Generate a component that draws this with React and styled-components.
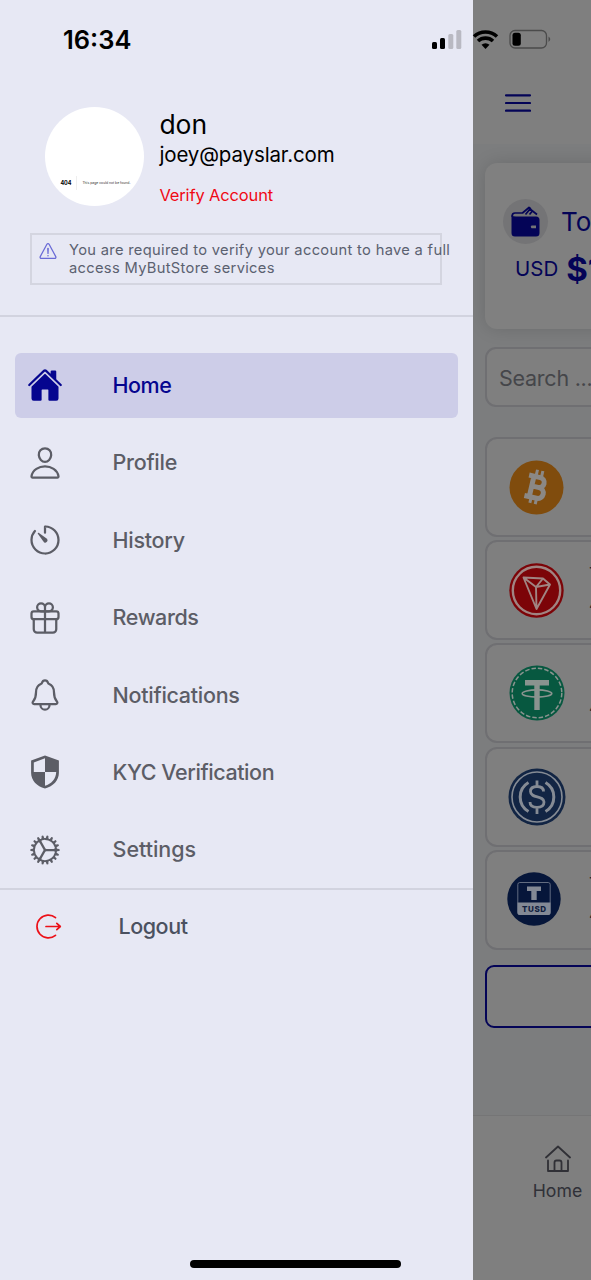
import React from 'react';
import styled, { createGlobalStyle, css } from 'styled-components';
import {
  IoHome,
  IoPersonOutline,
  IoTimerOutline,
  IoGiftOutline,
  IoNotificationsOutline,
  IoCogOutline,
  IoWarningOutline,
} from 'react-icons/io5';

const NAVY = '#05058f';
const NAVY_DIM = '#040457';

const MENU = [
  { label: 'Home', icon: <IoHome />, active: true, tracking: -0.5 },
  { label: 'Profile', icon: <IoPersonOutline /> },
  { label: 'History', icon: <IoTimerOutline /> },
  { label: 'Rewards', icon: <IoGiftOutline />, tracking: -0.4 },
  { label: 'Notifications', icon: <IoNotificationsOutline /> },
  { label: 'KYC Verification', icon: <ShieldIcon />, tracking: -0.42 },
  { label: 'Settings', icon: <IoCogOutline />, tracking: -0.05 },
];

const COINS = [
  { id: 'btc', icon: <BitcoinLogo />, left: 21.5 },
  { id: 'trx', icon: <TronLogo />, left: 21.5, name: 'TRX', amount: '4.00' },
  { id: 'usdt', icon: <TetherLogo />, left: 21.5, amount: '4.00' },
  { id: 'usdc', icon: <UsdcLogo />, left: 21 },
  { id: 'tusd', icon: <TusdLogo />, left: 20, name: 'TUSD', amount: '4.00' },
];

function App() {
  return (
    <Screen>
      <GlobalStyle />
      <Drawer>
        <Account>
          <Avatar>
            <AvatarCode>404</AvatarCode>
            <AvatarText>This page could not be found.</AvatarText>
          </Avatar>
          <AccountInfo>
            <Name>don</Name>
            <Email>joey@payslar.com</Email>
            <Verify>Verify Account</Verify>
          </AccountInfo>
        </Account>
        <Notice>
          <IoWarningOutline />
          <NoticeText>
            You are required to verify your account to have a full
            <br />
            access MyButStore services
          </NoticeText>
        </Notice>
        <Menu>
          {MENU.map((item) => (
            <MenuItem key={item.label} $active={item.active} $tracking={item.tracking}>
              <MenuIcon>{item.icon}</MenuIcon>
              <MenuLabel>{item.label}</MenuLabel>
            </MenuItem>
          ))}
        </Menu>
        <Logout>
          <LogoutIcon />
          Logout
        </Logout>
      </Drawer>

      <Page>
        <PageHeader>
          <MenuLines width="26" height="18" viewBox="0 0 26 18">
            <path d="M1 1.3h24M1 9h24M1 16.7h24" />
          </MenuLines>
        </PageHeader>
        <PageBody>
          <BalanceCard>
            <BalanceTitle>
              <WalletBadge>
                <WalletIcon />
              </WalletBadge>
              Total
            </BalanceTitle>
            <BalanceRow>
              <Currency>USD</Currency>
              <Amount>$1</Amount>
            </BalanceRow>
          </BalanceCard>
          <Search>Search ...</Search>
          <CoinList>
            {COINS.map((coin) => (
              <CoinCard key={coin.id}>
                <CoinLogo $left={coin.left}>{coin.icon}</CoinLogo>
                <CoinInfo>
                  <CoinLine>{coin.name}</CoinLine>
                  <CoinLine>{coin.amount}</CoinLine>
                </CoinInfo>
              </CoinCard>
            ))}
          </CoinList>
          <OutlineButton />
        </PageBody>
        <TabBar>
          <Tab>
            <TabHomeIcon />
            Home
          </Tab>
        </TabBar>
      </Page>

      <StatusBar>
        <Clock>16:34</Clock>
        <StatusIcons />
      </StatusBar>
      <HomeIndicator />
    </Screen>
  );
}

// icons

function ShieldIcon() {
  return (
    <svg viewBox="-1.5 -1.5 36 36">
      <path
        fill="currentColor"
        fillRule="evenodd"
        d="M16.5 0 30.400 5v12.200c0 7.500-5.600 13.600-13.900 15.800C8.200 30.800 2.600 24.700 2.600 17.200V5ZM16.500 2.800 5.300 7v9.500h11.200ZM16.500 16.500v13.800c6.300-1.800 11-6.800 11.200-13.800Z"
      />
    </svg>
  );
}

function LogoutIcon() {
  return (
    <svg width="27" height="27" viewBox="0 0 27 27" fill="none" stroke="#ec1018" strokeWidth="1.700">
      <path strokeLinecap="round" d="M20.500 4.600a11.400 11.400 0 1 0 0 17.800" />
      <path strokeLinecap="round" strokeLinejoin="round" d="M11 13.500h14M21.800 10.300l3.500 3.200-3.500 3.200" />
    </svg>
  );
}

function WalletIcon() {
  return (
    <svg width="29" height="31" viewBox="0 0 29 31">
      <path
        d="M1.300 11V9.500Q1.300 7 4 7h7.500l6.500-5.500 2 1.500M14.500 8.500 19 3l7 5.500M18.500 8.500l2.500-3"
        fill="none"
        stroke={NAVY_DIM}
        strokeWidth="1.700"
        strokeLinejoin="round"
      />
      <path
        fill={NAVY_DIM}
        fillRule="evenodd"
        d="M.5 9Q2 10.500 5 10.500h20q3.500 0 3.500 3.500V27q0 3.500-3.500 3.500H4Q.5 30.500.5 27ZM20.500 19.600q-1.600 1.300 0 2.600h4.500v-2.600Z"
      />
    </svg>
  );
}

function BitcoinLogo() {
  return (
    <svg width="55" height="55" viewBox="0 0 55 55">
      <circle cx="27.500" cy="27.500" r="27" fill="#804c0d" />
      <g transform="rotate(13 27.500 27.500)" fill="none" stroke="#8b8885">
        <path strokeWidth="5" d="M22.500 15.500v24M17.500 17H29a4.800 4.800 0 0 1 0 10H22.500M29 27h1a5.500 5.500 0 0 1 0 11H17.500" />
        <path strokeWidth="3" d="M24.500 10v6M30 10v6M24.500 38v6M30 38v6" />
      </g>
    </svg>
  );
}

function TronLogo() {
  return (
    <svg width="55" height="55" viewBox="0 0 55 55">
      <circle cx="27.500" cy="27.500" r="27.200" fill="#7c0408" />
      <circle cx="27.500" cy="27.500" r="23.700" fill="none" stroke="#a08482" strokeWidth="2.400" />
      <path
        d="M14.500 14.500 34 15.500l7 6L27.500 46Zm0 0L27 24l14-2.500M27 24l.5 22M27 24l7-8.500"
        fill="none"
        stroke="#a08482"
        strokeWidth="1.900"
        strokeLinejoin="round"
      />
    </svg>
  );
}

function TetherLogo() {
  return (
    <svg width="56" height="56" viewBox="0 0 56 56">
      <circle cx="28" cy="28" r="27.500" fill="#075840" />
      <circle cx="28" cy="28" r="24.800" fill="none" stroke="#8a938f" strokeWidth="1.500" strokeDasharray="4.500 2" />
      <path d="M16 15h24v5.500h-9.300V45h-5.400V20.500H16Z" fill="#8a938f" />
      <ellipse cx="28" cy="28.500" rx="14.800" ry="3.600" fill="none" stroke="#8a938f" strokeWidth="1.600" />
    </svg>
  );
}

function UsdcLogo() {
  return (
    <svg width="58" height="58" viewBox="0 0 58 58">
      <circle cx="29" cy="29" r="28.500" fill="#122544" />
      <g fill="none" stroke="#858b94">
        <circle cx="29" cy="29" r="25" strokeWidth="1.600" />
        <path strokeWidth="3" d="M20.500 14.500a16.800 16.800 0 0 0 0 29M37.500 14.500a16.800 16.800 0 0 1 0 29" />
        <path strokeWidth="2.800" d="M35.500 23.500c0-3.300-2.500-5-6.500-5s-6.500 1.800-6.500 5c0 7.200 13.500 3.500 13.500 10.500 0 3.400-2.700 5.300-7 5.300s-7-2-7-5.300M29 12.500v6M29 39v7" />
      </g>
    </svg>
  );
}

function TusdLogo() {
  return (
    <svg width="54" height="56" viewBox="0 0 54 56">
      <circle cx="27" cy="27" r="26.700" fill="#06163a" />
      <rect x="10.800" y="10.500" width="32.400" height="32" rx="2" fill="none" stroke="#626c80" />
      <path d="M10.500 30.500h33V41q0 2-2 2h-29q-2 0-2-2ZM20 14.500h14V19h-4.300v9h-5.400v-9H20Z" fill="#838995" />
      <text x="27" y="39.800" textAnchor="middle" fontFamily="Inter" fontWeight="800" fontSize="8" textLength="24" fill="#10203f">
        TUSD
      </text>
    </svg>
  );
}

function TabHomeIcon() {
  return (
    <svg width="26" height="28" viewBox="0 0 26 28" fill="none" stroke="#303036" strokeWidth="1.800">
      <path strokeLinecap="round" strokeLinejoin="round" d="M1 12.500 13 1.500l12 11" />
      <path strokeLinejoin="round" strokeLinecap="round" d="M3 15.500V26h20V15.500M9.500 26v-8.500q0-2 2-2h3q2 0 2 2V26" />
    </svg>
  );
}

function StatusIcons() {
  return (
    <svg width="122" height="22" viewBox="0 0 122 22">
      <rect x="1" y="13" width="5" height="7" rx="1.500" />
      <rect x="9" y="9" width="5" height="11" rx="1.500" />
      <rect x="17.300" y="5" width="5" height="15" rx="1.500" fill="#b9b9c2" />
      <rect x="25.300" y="1" width="5" height="19" rx="1.500" fill="#b9b9c2" />
      <g fill="none" stroke="#000" strokeWidth="3.600">
        <path d="M43 7.500a17 17 0 0 1 23 0" />
        <path d="M47 12a11.200 11.200 0 0 1 15 0" />
      </g>
      <path d="m50.500 15.800 4 4.200 4-4.200a6 6 0 0 0-8 0Z" />
      <rect x="79" y="1.500" width="36.500" height="17.500" rx="5" fill="none" stroke="#4b4b4b" strokeWidth="1.300" />
      <rect x="81.500" y="3.700" width="8.300" height="13" rx="2.500" />
      <path d="M117.500 7.500q3.500 2.700 0 5.500Z" fill="#4b4b4b" />
    </svg>
  );
}

// styles

const GlobalStyle = createGlobalStyle`
  * {
    box-sizing: border-box;
  }
  body {
    margin: 0;
    font-family: Inter, 'Liberation Sans', sans-serif;
  }
  svg {
    display: block;
    flex-shrink: 0;
  }
`;

const Screen = styled.div`
  position: relative;
  display: flex;
  width: 591px;
  height: 1280px;
  overflow: hidden;
`;

const Drawer = styled.aside`
  flex: 0 0 473px;
  padding-top: 107.400px;
  background: #e7e8f4;
`;

const Account = styled.div`
  display: flex;
  gap: 15px;
  height: 126px;
  padding-left: 45.400px;
`;

const Avatar = styled.div`
  display: flex;
  align-items: center;
  width: 99px;
  height: 99px;
  padding: 53px 0 0 15px;
  border-radius: 50%;
  background: #fff;
  overflow: hidden;
  white-space: nowrap;
`;

const AvatarCode = styled.span`
  width: 17px;
  border-right: 1px solid #eee;
  font-size: 5.500px;
  font-weight: 700;
  line-height: 14px;
`;

const AvatarText = styled.span`
  padding-left: 5px;
  color: #333;
  font-size: 3.400px;
  line-height: 8px;
`;

const AccountInfo = styled.div`
  color: #000;
`;

const Name = styled.div`
  font-size: 26.500px;
  line-height: 34px;
`;

const Email = styled.div`
  font-size: 20.500px;
  letter-spacing: -0.130px;
  line-height: 28px;
`;

const Verify = styled.div`
  margin-top: 19px;
  color: #f00a14;
  font-size: 16.500px;
  letter-spacing: -0.150px;
  line-height: 14px;
`;

const Notice = styled.div`
  display: flex;
  gap: 11px;
  width: 412px;
  height: 52px;
  margin-left: 30px;
  padding: 6px 0 0 6px;
  border: 2px solid #d4d5e0;
  color: #6a6ad6;
  font-size: 20px;
`;

const NoticeText = styled.p`
  margin: 0;
  color: #5b6170;
  font-size: 14.700px;
  letter-spacing: 0.320px;
  line-height: 18px;
  white-space: nowrap;
`;

const Menu = styled.nav`
  display: flex;
  flex-direction: column;
  gap: 12.400px;
  height: 575px;
  margin-top: 29.600px;
  padding: 36px 15px 0;
  border-top: 2px solid #d2d3df;
  border-bottom: 2px solid #d2d3df;
`;

const MenuItem = styled.div`
  display: flex;
  flex: 0 0 65px;
  align-items: center;
  gap: 49.400px;
  padding-left: 12.200px;
  border-radius: 6px;
  color: #5c5d66;
  font-size: 21.500px;
  font-weight: 500;
  letter-spacing: ${({ $tracking = -0.28 }) => $tracking}px;
  ${({ $active }) =>
    $active &&
    css`
      background: #cdcde8;
      color: ${NAVY};
    `}
`;

const MenuIcon = styled.span`
  width: 36px;
  height: 36px;

  svg {
    width: 36px;
    height: 36px;
  }
`;

const MenuLabel = styled.span`
  padding-bottom: 1px;
`;

const Logout = styled.div`
  display: flex;
  align-items: center;
  gap: 56.500px;
  height: 73px;
  padding-left: 35px;
  color: #4b5160;
  font-size: 21.500px;
  font-weight: 500;
  letter-spacing: -0.450px;
`;

const Page = styled.main`
  display: flex;
  flex: 1;
  flex-direction: column;
  min-width: 0;
  overflow: hidden;
  background: #7c7d7e;
`;

const PageHeader = styled.header`
  height: 144px;
  padding: 93.500px 0 0 32px;
  background: #7f7f7f;
`;

const MenuLines = styled.svg`
  fill: none;
  stroke: ${NAVY_DIM};
  stroke-width: 2.200;
  stroke-linecap: round;
`;

const PageBody = styled.div`
  flex: 1;
  padding: 19px 0 0 12px;
`;

const BalanceCard = styled.section`
  width: 300px;
  height: 166px;
  padding: 36px 0 0 18px;
  border-radius: 12px;
  background: #808080;
  box-shadow: 0 0 18px rgba(0, 0, 0, 0.140);
  color: ${NAVY_DIM};
`;

const BalanceTitle = styled.div`
  display: flex;
  align-items: center;
  gap: 13px;
  font-size: 26px;
`;

const WalletBadge = styled.span`
  display: flex;
  align-items: center;
  justify-content: center;
  width: 45px;
  height: 45px;
  border-radius: 50%;
  background: #747476;
`;

const BalanceRow = styled.div`
  display: flex;
  align-items: center;
  gap: 8px;
  margin-top: 5px;
  padding-left: 12px;
  line-height: 40px;
`;

const Currency = styled.span`
  font-size: 20.500px;
`;

const Amount = styled.strong`
  font-size: 33px;
`;

const Search = styled.div`
  width: 300px;
  height: 60px;
  margin-top: 18px;
  padding-left: 12px;
  border: 2px solid #6f6f72;
  border-radius: 11px;
  background: #7f7f7f;
  color: #45464a;
  font-size: 21.500px;
  letter-spacing: -0.250px;
  line-height: 58px;
`;

const CoinList = styled.div`
  display: flex;
  flex-direction: column;
  gap: 3.200px;
  margin-top: 30px;
`;

const CoinCard = styled.div`
  display: flex;
  align-items: center;
  width: 300px;
  height: 100px;
  border: 2px solid #6f6f72;
  border-radius: 12px;
  background: #7f7f7f;
`;

const CoinLogo = styled.div`
  flex: 0 0 102px;
  padding-left: ${({ $left }) => $left}px;
`;

const CoinInfo = styled.div`
  display: flex;
  flex-direction: column;
  gap: 8px;
  color: #26262e;
  font-size: 18px;
  line-height: 22px;
`;

const CoinLine = styled.span`
  height: 22px;
`;

const OutlineButton = styled.button`
  display: block;
  width: 300px;
  height: 63px;
  margin-top: 15px;
  border: 2px solid ${NAVY_DIM};
  border-radius: 9px;
  background: #7f7f7f;
`;

const TabBar = styled.footer`
  height: 165px;
  padding: 29px 0 0 55px;
  border-top: 1px solid #757576;
  background: #7f7f7f;
`;

const Tab = styled.div`
  display: flex;
  flex-direction: column;
  align-items: center;
  gap: 8px;
  width: 59px;
  color: #303138;
  font-size: 17.700px;
  line-height: 20px;
`;

const StatusBar = styled.div`
  position: absolute;
  top: 24px;
  left: 63px;
  display: flex;
  align-items: center;
  justify-content: space-between;
  width: 490px;
  height: 32px;
`;

const Clock = styled.time`
  padding-bottom: 2px;
  font-size: 25.500px;
  font-weight: 600;
`;

const HomeIndicator = styled.div`
  position: absolute;
  bottom: 12px;
  left: 190px;
  width: 211px;
  height: 8px;
  border-radius: 4px;
  background: #000;
`;

export default App;
